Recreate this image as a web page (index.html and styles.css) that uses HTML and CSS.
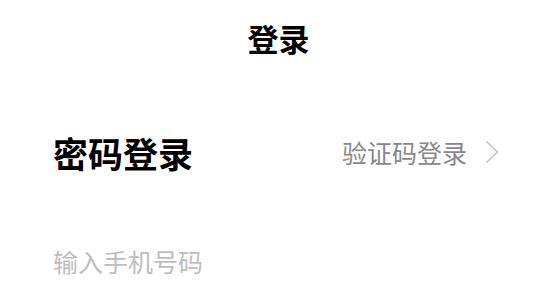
FILE: index.html
```html
<!DOCTYPE html>
<html lang="zh-CN">
<head>
<meta charset="utf-8">
<link rel="stylesheet" href="styles.css">
</head>
<body>
<div class="page">
  <header class="nav"><h1 class="nav-title">登录</h1></header>
  <div class="mode-row">
    <h2 class="mode-title">密码登录</h2>
    <a class="mode-switch">验证码登录<svg class="chev" width="14" height="24" viewBox="0 0 14 24"><path d="M1.5 1.5 L12.5 12 L1.5 22.5" fill="none" stroke="#c4c4c4" stroke-width="1.6"/></svg></a>
  </div>
  <div class="field"><span class="placeholder">输入手机号码</span></div>
</div>
</body>
</html>
```
FILE: styles.css
```css
html, body { margin: 0; padding: 0; background: #fff; }
body { font-family: "Noto Sans CJK SC", "Noto Sans", sans-serif; width: 557px; height: 289px; overflow: hidden; }
.page { display: flex; flex-direction: column; }
.nav { height: 74px; display: flex; align-items: center; justify-content: center; }
.nav-title { margin: 0; font-size: 31px; font-weight: 700; color: #000; line-height: 1; }
.mode-row { display: flex; align-items: center; justify-content: space-between; padding: 0 58px 0 53px; height: 156px; }
.mode-title { margin: 0; font-size: 35px; font-weight: 700; color: #000; line-height: 1; }
.mode-switch { display: flex; align-items: center; gap: 18px; font-size: 25px; color: #888; line-height: 1; }
.chev { display: block; }
.field { padding: 0 53px; height: 62px; display: flex; align-items: center; }
.placeholder { font-size: 25px; color: #bdbdbd; line-height: 1; }
```
